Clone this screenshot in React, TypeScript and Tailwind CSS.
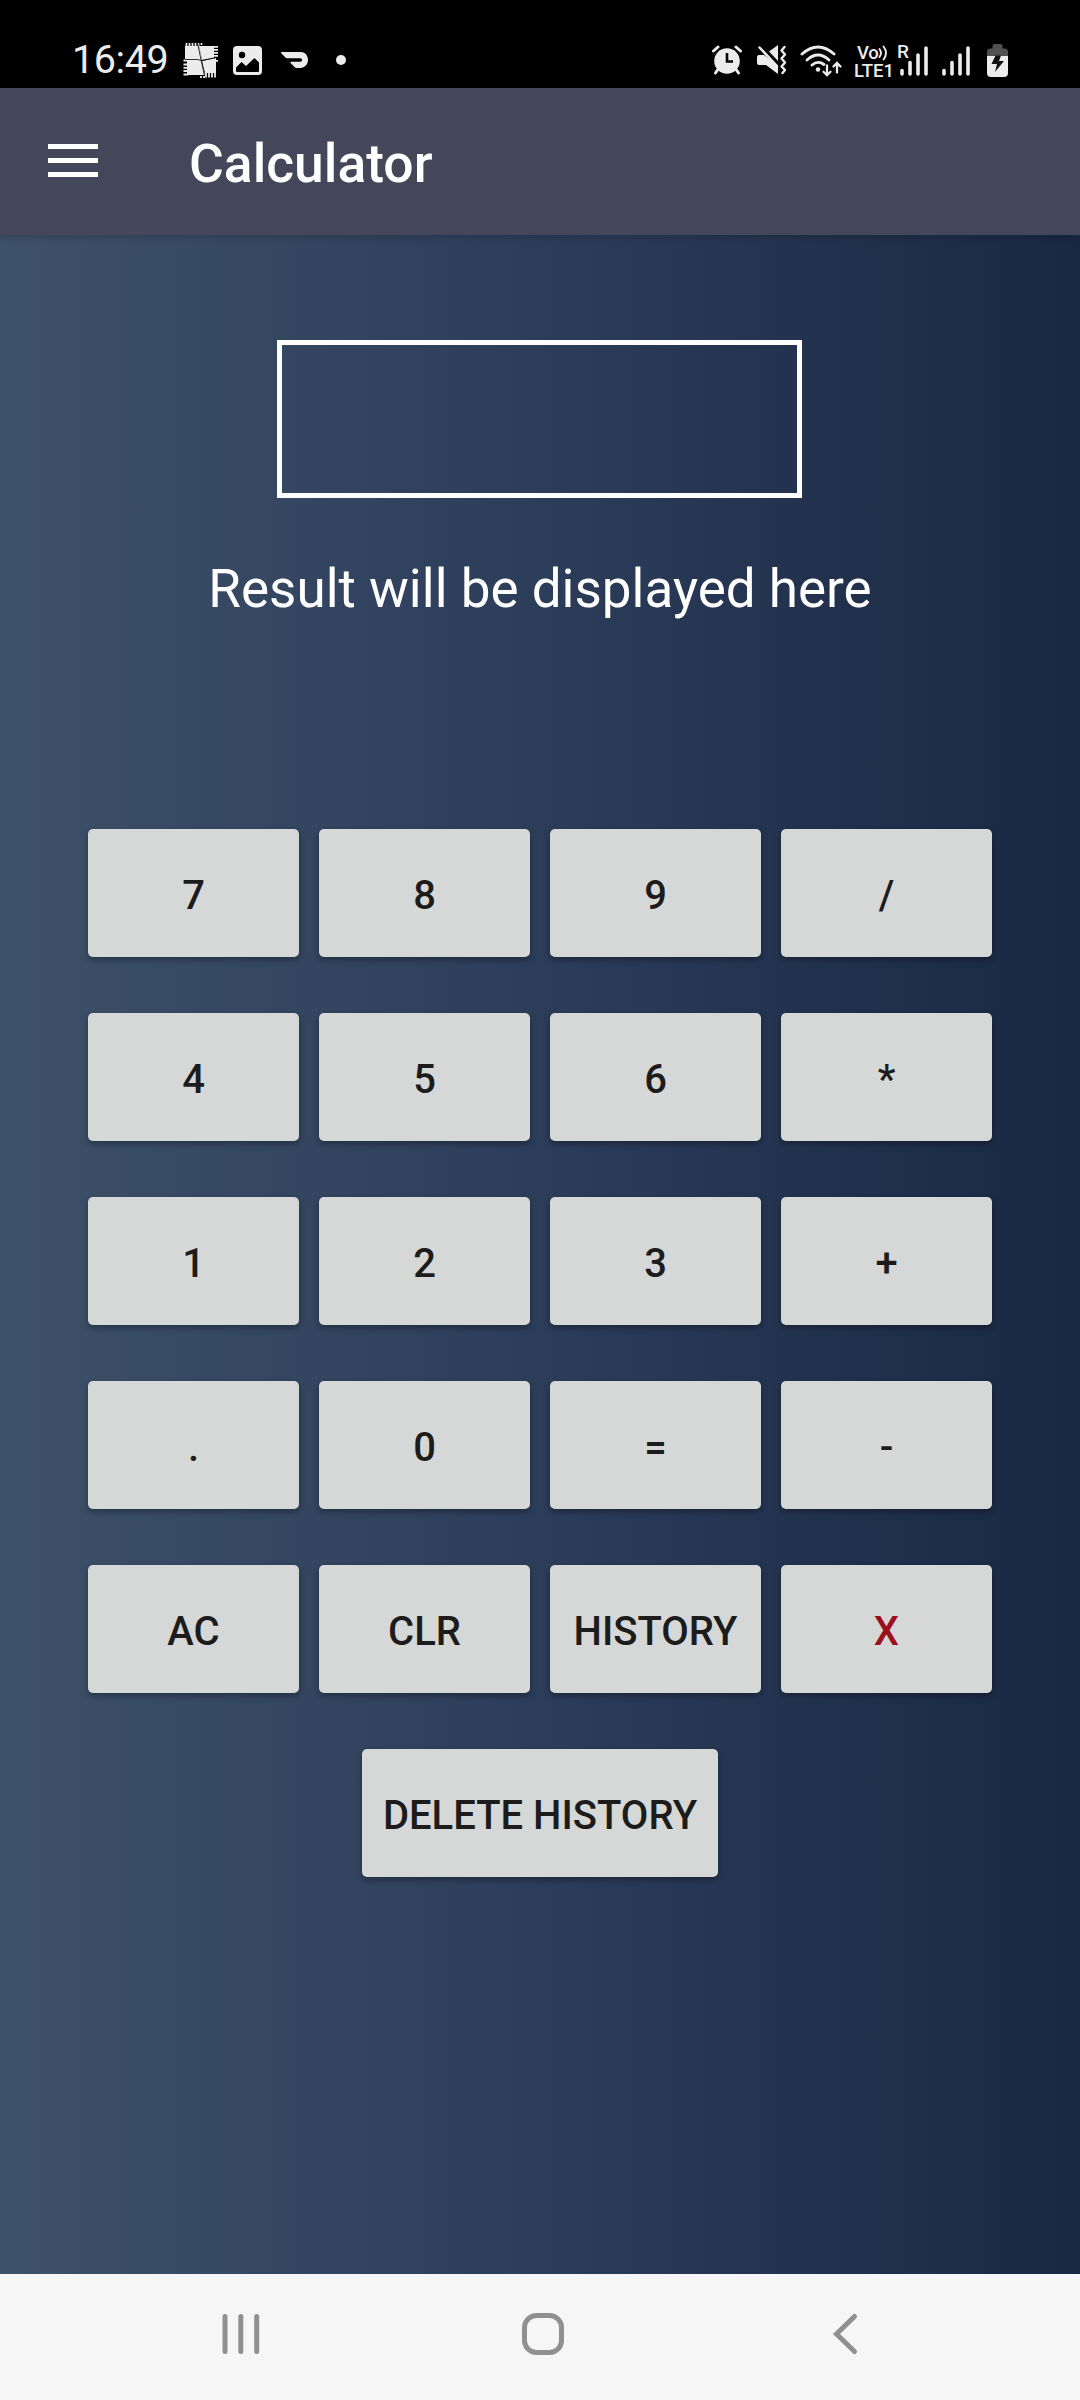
import React from "react";

const FG = "#ececec";

function PuzzleIcon() {
  return (
    <svg className="ml-[17px] mt-[42px] h-[38px] w-[36px] shrink-0" viewBox="183 42 36 38">
      <path d="M185 46H199L202 60H185Z" fill={FG} />
      <path d="M199 46H214V58L202 60Z" fill={FG} />
      <path d="M187 60H201L205 75H187Z" fill={FG} />
      <path d="M202 61L216 58V73H205Z" fill={FG} />
      <path d="M186.5 43v4M189.5 43v4M192.5 43v4M195.5 43v4M198.5 43v4M201.5 43v2" stroke={FG} strokeWidth="1.7" />
      <path d="M213 46.8h5M213 49.8h5M213 52.8h5M213 55.8h5M215 60.8h3" stroke={FG} strokeWidth="1.7" />
      <path d="M183.5 60.5h5M183.5 64.5h5M183.5 67.8h5M183.5 71h5M183.5 74.5h5" stroke={FG} strokeWidth="1.8" />
      <path d="M206 72v5.5M209 72v5.5M212 72v5.5M215 72v5.5M201 76v2M204 76v2" stroke={FG} strokeWidth="1.8" />
      <path d="M197.500 43L204.500 76M185 59.500H197L202 60.500L216 57.500" stroke="#000" strokeWidth="0.8" fill="none" />
    </svg>
  );
}

function ImageIcon() {
  return (
    <svg className="ml-[14px] mt-[46px] h-[29px] w-[29px] shrink-0" viewBox="0 0 29 29">
      <rect width="29" height="29" rx="4" fill={FG} />
      <circle cx="9" cy="9" r="3.200" fill="#000" />
      <path d="M3 21.500L8.500 16L13 20L21.500 12L26 16.500V25Q26 26 25 26H4Q3 26 3 25Z" fill="#000" />
    </svg>
  );
}

function DashIcon() {
  return (
    <svg className="ml-[19px] mt-[52px] h-[16px] w-[27px] shrink-0" viewBox="0 5.100 24 13.800" preserveAspectRatio="none">
      <path
        d="M23.071 8.409a6.09 6.09 0 0 0-5.396-3.228H.584A.589.589 0 0 0 .17 6.184L3.894 9.930a1.752 1.752 0 0 0 1.242.516h12.049a1.554 1.554 0 1 1 .031 3.108H8.910a.589.589 0 0 0-.415 1.003l3.725 3.747a1.750 1.750 0 0 0 1.242.516h3.757c4.887 0 8.584-5.225 5.852-10.413"
        fill={FG}
      />
    </svg>
  );
}

function AlarmIcon() {
  return (
    <svg className="h-[30px] w-[30px] shrink-0" viewBox="0 0 30 30">
      <circle cx="15" cy="16" r="12.800" fill={FG} />
      <path d="M1.500 6L6 2M28.500 6L24 2M5.500 25L3.500 28M24.500 25L26.500 28" stroke={FG} strokeWidth="3" strokeLinecap="round" />
      <path d="M15 8V16.500H21" stroke="#000" strokeWidth="2.600" fill="none" />
    </svg>
  );
}

function MuteIcon() {
  return (
    <svg className="ml-[15px] h-[30px] w-[30px] shrink-0" viewBox="0 0 30 30">
      <path d="M0 12Q0 10 2 10H7L21 21V29L9 20H2Q0 20 0 18Z" fill={FG} />
      <path d="M12 6.500L21 0V16Z" fill={FG} />
      <path d="M2.500 2.500L20 21" stroke={FG} strokeWidth="2.500" strokeLinecap="round" />
      <path d="M27.500 2L24.500 5.500L28 9.500L24.500 13.500L28 17.500L24.500 21.500L28 25L25.500 28" stroke={FG} strokeWidth="2.400" fill="none" strokeLinecap="round" strokeLinejoin="round" />
    </svg>
  );
}

function WifiIcon() {
  return (
    <svg className="ml-[13px] h-[32px] w-[42px] shrink-0" viewBox="800 44.5 42 32">
      <g stroke={FG} strokeWidth="2.900" fill="none" strokeLinecap="round">
        <path d="M802 53.500Q818 39.500 834 53.500" />
        <path d="M807 59.500Q818 49.500 829 59.500" />
        <path d="M812 64.500Q818 59.500 824 64" />
        <path d="M827 65V74M823.500 71.200L827 74.700L830.500 71.200" strokeWidth="2.300" />
        <path d="M837 72V63M833.500 66L837 62.500L840.500 66" strokeWidth="2.300" />
      </g>
      <circle cx="818" cy="69" r="2.200" fill={FG} />
    </svg>
  );
}

function VoLte() {
  return (
    <div className="ml-[12px] flex h-[34px] w-[39px] shrink-0 flex-col text-[18.500px] font-medium leading-[18px]">
      <div className="-mt-px flex h-[18px] pl-[3px]">
        <span className="tracking-[-0.3px]">Vo</span>
        <svg className="h-[18px] w-[12px]" viewBox="0 0 12 18">
          <path d="M1.500 5Q4.500 9 1.500 13M5.500 2.500Q10.500 9 5.500 15.500" stroke={FG} strokeWidth="1.900" fill="none" strokeLinecap="round" />
        </svg>
      </div>
      <span className="h-[18px]">LTE1</span>
    </div>
  );
}

function SignalBars({ className }: { className: string }) {
  return (
    <svg className={className} viewBox="0 0 30 30">
      <path d="M2 24.500V28M10 16.500V28M18 9V28M26 2V28" stroke={FG} strokeWidth="3.600" strokeLinecap="round" />
    </svg>
  );
}

function BatteryIcon() {
  return (
    <svg className="-mt-px ml-[15px] h-[33px] w-[22px] shrink-0" viewBox="0 0 22 33">
      <path d="M0 12V8Q0 4.500 3.500 4.500H5.500V2Q5.500 0 7.500 0H13.500Q15.500 0 15.500 2V4.500H17.500Q21 4.500 21 8V12Z" fill="#515151" />
      <path d="M0 12H21V29Q21 33 17 33H4Q0 33 0 29Z" fill={FG} />
      <path d="M8.500 11.500H14L12 17H17L8 28L10 20H4.500Z" fill="#111" />
    </svg>
  );
}

function StatusBar() {
  return (
    <div className="flex h-[88px] items-start bg-black text-[#ececec]">
      <span className="ml-[72px] mt-[36px] w-[94px] whitespace-nowrap text-[39.500px] leading-[48px] tracking-[-0.4px]">16:49</span>
      <PuzzleIcon />
      <ImageIcon />
      <DashIcon />
      <div className="ml-[28px] mt-[55px] size-[10px] rounded-full bg-[#ececec]" />
      <div className="ml-auto mr-[71px] mt-[45px] flex items-start">
        <AlarmIcon />
        <MuteIcon />
        <WifiIcon />
        <VoLte />
        <div className="relative ml-[7px] mt-[1px] h-[30px] w-[30px]">
          <span className="absolute -left-[3px] -top-[3px] text-[19px] font-medium leading-[18px]">R</span>
          <SignalBars className="h-[30px] w-[30px]" />
        </div>
        <SignalBars className="ml-[12px] mt-[1px] h-[30px] w-[30px] shrink-0" />
        <BatteryIcon />
      </div>
    </div>
  );
}

function AppBar() {
  return (
    <header className="relative flex h-[147px] items-center bg-[#444759] shadow-[0_2px_8px_rgba(0,0,0,0.18)]">
      <button aria-label="Open menu" className="mb-[2px] ml-[48px] flex w-[50px] flex-col gap-[9px]">
        <span className="h-[5px] w-full bg-white" />
        <span className="h-[5px] w-full bg-white" />
        <span className="h-[5px] w-full bg-white" />
      </button>
      <h1 className="ml-[91px] mt-[4px] text-[53.400px] font-medium leading-[62px] text-white">Calculator</h1>
    </header>
  );
}

const KEYS = ["7", "8", "9", "/", "4", "5", "6", "*", "1", "2", "3", "+", ".", "0", "=", "-", "AC", "CLR", "HISTORY", "X"];

function Key({ label, wide = false }: { label: string; wide?: boolean }) {
  return (
    <button
      className={`flex h-32 items-center justify-center whitespace-nowrap rounded-[5px] bg-[#d6d8d7] pt-[6px] text-[40px] font-medium leading-[46px] shadow-[0_3px_6px_rgba(0,0,0,0.32)] ${
        wide ? "w-[356px]" : "w-[211px]"
      } ${label === "X" ? "text-[#9c1020]" : "text-[#1c1c1c]"}`}
    >
      {label}
    </button>
  );
}

function NavBar() {
  return (
    <nav className="flex h-[126px] items-start bg-[#f6f6f6] pt-[38px] text-[#909090]">
      <svg className="ml-[220px] h-[44px] w-[42px]" viewBox="220 2312 42 44" fill="none" stroke="currentColor" strokeWidth="5" strokeLinecap="round">
        <path d="M225 2316.500V2351.500M240.800 2316.500V2351.500M256.700 2316.500V2351.500" />
      </svg>
      <svg className="ml-[259px] h-[44px] w-[44px]" viewBox="521 2312 44 44" fill="none" stroke="currentColor" strokeWidth="5">
        <rect x="524.5" y="2315.500" width="37" height="37" rx="12" />
      </svg>
      <svg className="ml-[266px] h-[44px] w-[30px]" viewBox="831 2312 30 44" fill="none" stroke="currentColor" strokeWidth="5" strokeLinecap="round">
        <path d="M854.500 2316.500L836.500 2334L854.500 2351.500" />
      </svg>
    </nav>
  );
}

export default function App() {
  return (
    <div className="flex h-[2400px] w-[1080px] flex-col overflow-hidden font-['Roboto',sans-serif]">
      <StatusBar />
      <AppBar />
      <main className="flex flex-1 flex-col items-center bg-[linear-gradient(90deg,#3d5168_0%,#2c3d5a_50%,#192842_100%)]">
        <div className="mr-px mt-[105px] h-[158px] w-[525px] shrink-0 border-[5px] border-white" />
        <p className="mt-[60px] h-[62px] whitespace-nowrap text-[53px] leading-[62px] text-white">Result will be displayed here</p>
        <div className="mt-[209px] grid grid-cols-4 gap-x-5 gap-y-14">
          {KEYS.map((k) => (
            <Key key={k} label={k} />
          ))}
        </div>
        <div className="mt-14">
          <Key label="DELETE HISTORY" wide />
        </div>
      </main>
      <NavBar />
    </div>
  );
}
